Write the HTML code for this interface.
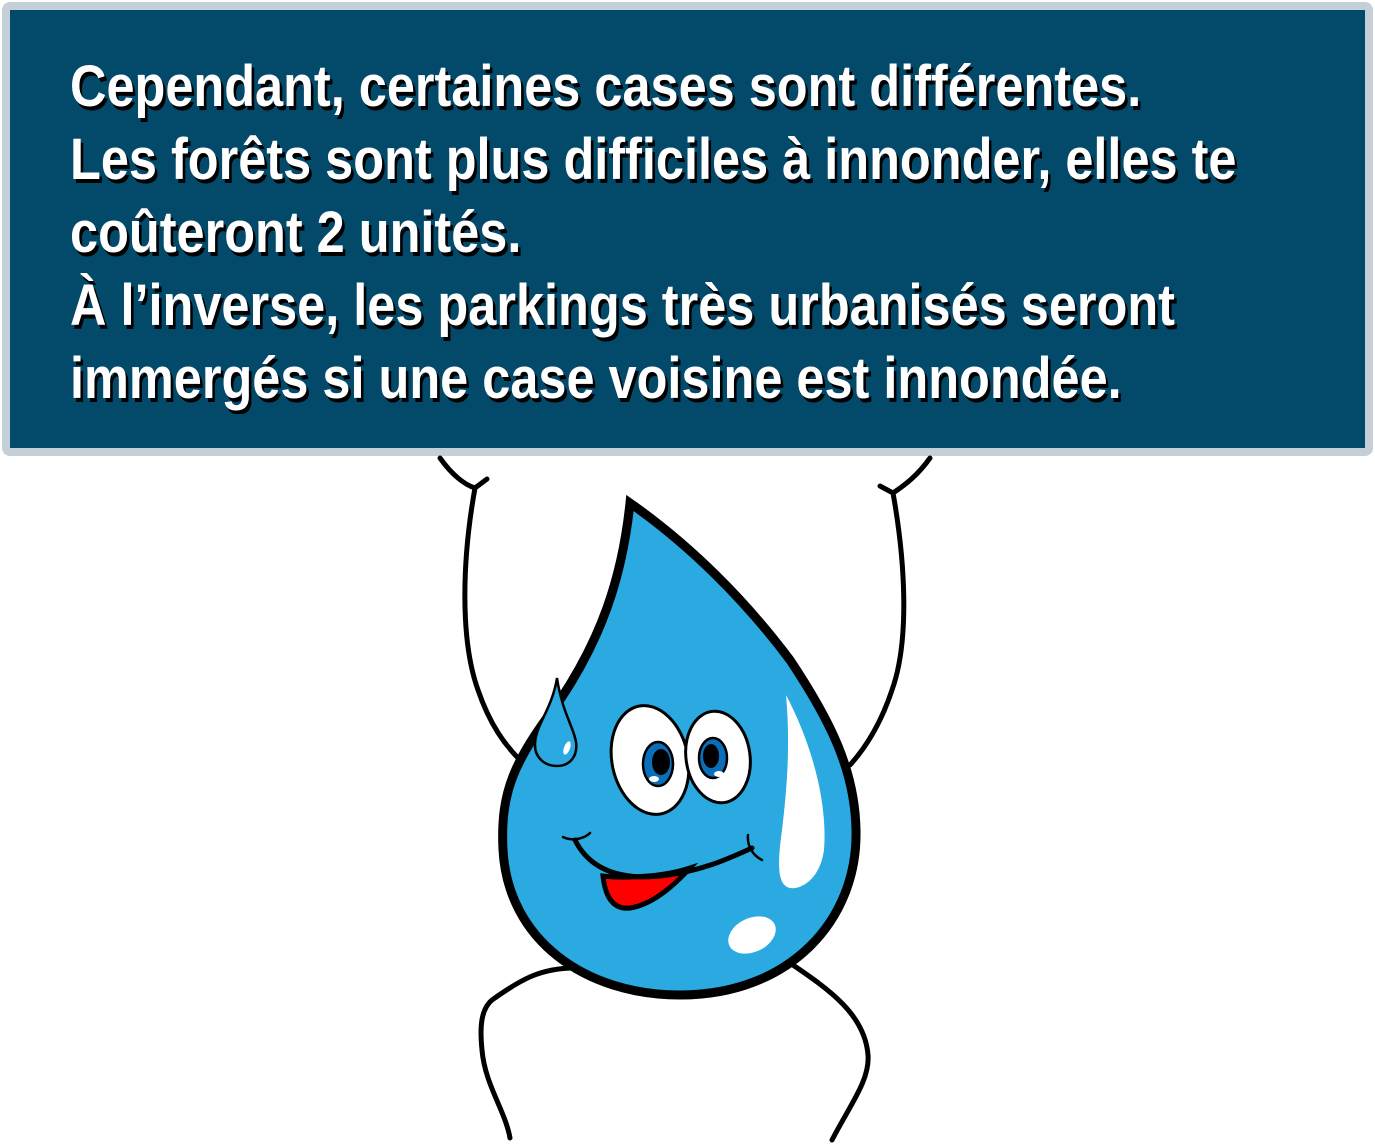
<!DOCTYPE html>
<html><head><meta charset="utf-8"><style>
html,body{margin:0;padding:0;background:#fff;width:1375px;height:1144px;overflow:hidden}
.box{position:absolute;left:2px;top:2px;width:1355px;height:438px;background:#02496a;border:8px solid #c5cfd8;border-radius:8px}
.t{position:absolute;left:70px;top:50px;color:#fff;font-family:"Liberation Sans",sans-serif;font-weight:bold;font-size:58px;line-height:73px;text-shadow:3px 4px 0 #000;white-space:pre;transform:scaleX(0.87);transform-origin:0 0}
svg{position:absolute;left:0;top:0}
</style></head><body>
<div class="box"></div>
<div class="t">Cependant, certaines cases sont différentes.
Les forêts sont plus difficiles à innonder, elles te
coûteront 2 unités.
À l’inverse, les parkings très urbanisés seront
immergés si une case voisine est innondée.</div>
<svg width="1375" height="1144" viewBox="0 0 1375 1144" fill="none" stroke="#000" stroke-linecap="round">
<g stroke-width="5">
<path d="M440,458 C452,475 465,485 475,488 M475,488 L487,479 M475,488 C462,560 460,640 478,690 C490,725 505,745 520,760"/>
<path d="M930,458 C918,475 905,485 893,493 M893,493 L880,486 M893,493 C905,560 910,640 892,690 C882,720 868,745 850,765"/>
<path d="M575,968 C540,968 520,980 492,1000 C480,1010 480,1030 482,1050 C485,1085 505,1110 510,1138"/>
<path d="M790,963 C830,990 865,1015 868,1055 C870,1080 850,1105 832,1140"/>
</g>
<path d="M630,503 C622,580 600,640 560,700 C515,760 500,790 503,850 C508,940 585,995 680,995 C790,995 858,920 856,830 C855,770 830,720 790,660 C745,600 690,545 630,503 Z" fill="#2aaae1" stroke-width="9" stroke-linejoin="miter"/>
<path d="M786,695 C810,740 828,800 824,850 C820,880 800,890 790,888 C776,885 778,860 782,830 C788,780 790,740 786,695 Z" fill="#fff" stroke="none"/>
<ellipse cx="752" cy="935" rx="25" ry="17" transform="rotate(-25 752 935)" fill="#fff" stroke="none"/>
<path d="M557,678 C552,710 535,725 535,745 C535,758 545,766 557,766 C570,766 578,756 576,742 C574,728 562,712 557,678 Z" fill="#2aaae1" stroke-width="2.5"/>
<ellipse cx="567" cy="748" rx="3" ry="7" transform="rotate(20 567 748)" fill="#fff" stroke="none"/>
<ellipse cx="650" cy="760" rx="38" ry="55" transform="rotate(-12 650 760)" fill="#fff" stroke-width="3"/>
<ellipse cx="718" cy="757" rx="32" ry="46" transform="rotate(-8 718 757)" fill="#fff" stroke-width="3"/>
<ellipse cx="658" cy="764" rx="15" ry="22" fill="#0a6fb8" stroke-width="2.5"/>
<ellipse cx="661" cy="762" rx="9" ry="13" fill="#000" stroke="none"/>
<ellipse cx="654" cy="779" rx="5" ry="3" fill="#fff" stroke="none"/>
<ellipse cx="713" cy="758" rx="14" ry="20" fill="#0a6fb8" stroke-width="2.5"/>
<ellipse cx="711" cy="756" rx="8" ry="12" fill="#000" stroke="none"/>
<ellipse cx="719" cy="774" rx="5" ry="3" fill="#fff" stroke="none"/>
<path d="M603,876 C620,878 660,878 690,868 C670,890 650,905 630,908 C612,910 605,895 603,876 Z" fill="#ff0000" stroke-width="5"/>
<path d="M575,840 C590,870 620,880 660,876 C700,872 730,858 752,848" stroke-width="5"/>
<path d="M563,837 C573,842 585,838 590,833 M748,835 C747,845 752,855 762,860" stroke-width="2.5"/>
</svg>
</body></html>
